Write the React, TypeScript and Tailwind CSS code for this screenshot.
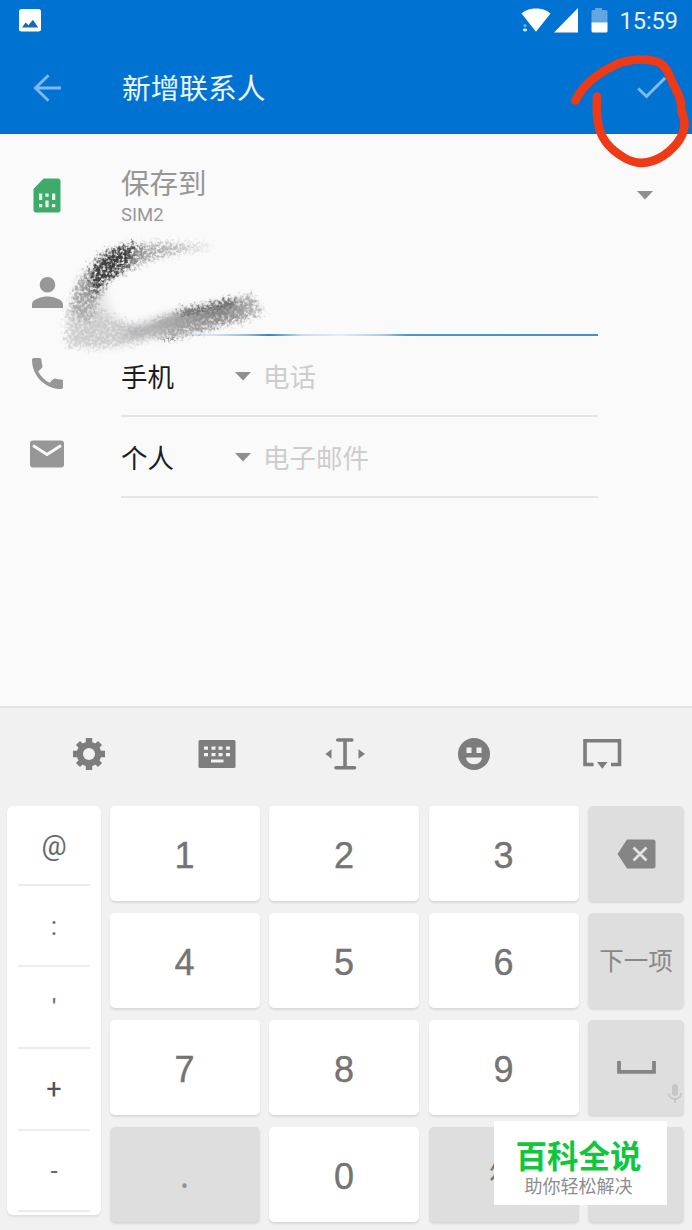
import type { ReactNode } from "react";

const FONT = "font-['Roboto','Noto_Sans_CJK_SC',sans-serif]";
const CJK = "font-['Noto_Sans_CJK_SC',sans-serif]";

function Caret() {
  return (
    <svg width="16" height="9" viewBox="0 0 16 9" className="block shrink-0 fill-[#8f8f8f]">
      <path d="M0 0h16L8 8.6z" />
    </svg>
  );
}

function StatusBar() {
  return (
    <div className="flex h-10 items-center justify-between pr-[14px] pl-[19px]">
      <svg width="22" height="23" viewBox="0 0 22 23" className="block">
        <rect width="22" height="22.500" rx="2.500" fill="#fff" />
        <path d="M3 18.500l3.700-5 2.700 2.800 4.500-5.500 5.300 7.700z" fill="#1769b0" />
      </svg>
      <div className="flex items-center">
        <svg width="88" height="26" viewBox="0 0 88 26" className="mr-[11px] block">
          <path d="M1.500 6.500C6 2.500 11 1.500 16 1.500s10 1 14.500 5L16 24.800z" fill="#fff" />
          <circle cx="5" cy="18.500" r="1.600" fill="#6fb0e8" />
          <ellipse cx="5" cy="23" rx="2.200" ry="1.400" fill="#cfe5f8" />
          <path d="M58 1v24.500H34z" fill="#fff" />
          <path d="M71 3h4V1h7v2h4a1.500 1.500 0 0 1 1.500 1.500V16h-16V4.500A1.500 1.500 0 0 1 73 3z" fill="#5fa6e2" />
          <path d="M71.500 15.500h16V24a1.500 1.500 0 0 1-1.500 1.500H73a1.500 1.500 0 0 1-1.500-1.500z" fill="#fff" />
        </svg>
        <span className="pt-[4px] text-[23.500px] leading-none text-[#e4f1fc]">15:59</span>
      </div>
    </div>
  );
}

function AppBar() {
  return (
    <div className="flex h-[94px] items-center pt-px pr-[25px] pl-[33px]">
      <svg width="29" height="28" viewBox="0 0 29 28" className="block" fill="none" stroke="#7db9ee" strokeWidth="2.900">
        <path d="M28 14H3M15.500 1.300L2.500 14l13 12.700" />
      </svg>
      <h1 className={`ml-[60px] flex-1 text-[28.700px] leading-none text-[#e9f5ff] ${CJK}`}>新增联系人</h1>
      <svg width="30" height="22" viewBox="0 0 30 22" className="block" fill="none" stroke="#7fbcf3" strokeWidth="3">
        <path d="M1.300 11.500l8.200 8L28 1" />
      </svg>
    </div>
  );
}

function RedCircle() {
  return (
    <svg width="132" height="120" viewBox="560 50 132 120" className="pointer-events-none absolute top-[50px] left-[560px]" fill="none" stroke="#ee3a17" strokeWidth="8.600" strokeLinecap="round" strokeLinejoin="round">
      <path d="M575.500 100.500C582 86 597 74 614 65.500C628 59 643 59 652 60.500C662 62 667 68 671 79C675 89 682 98 681 107C680 112 685 116 684.500 124C684 138 673 149 663 156C650 164 637 166 623 157C610 149 600 139 598 122C596 112 597 103 597 96.500" />
    </svg>
  );
}

function Smudge() {
  return (
    <svg width="400" height="130" viewBox="40 230 400 130" className="pointer-events-none absolute top-[230px] left-[40px]">
      <defs>
        <filter id="grain" x="-15%" y="-30%" width="130%" height="160%" colorInterpolationFilters="sRGB">
          <feGaussianBlur in="SourceGraphic" stdDeviation="2.4" result="soft" />
          <feTurbulence type="fractalNoise" baseFrequency="0.32" numOctaves="2" seed="8" result="noise" />
          <feDisplacementMap in="soft" in2="noise" scale="17" xChannelSelector="R" yChannelSelector="G" result="rough" />
          <feColorMatrix in="noise" type="matrix" values="0 0 0 0 0  0 0 0 0 0  0 0 0 0 0  0 0 3.2 0 -0.75" result="holes" />
          <feComposite in="rough" in2="holes" operator="in" result="speckled" />
          <feGaussianBlur in="speckled" stdDeviation="0.7" />
        </filter>
        <filter id="haze" x="-20%" y="-40%" width="140%" height="180%">
          <feGaussianBlur stdDeviation="4" />
        </filter>
        <linearGradient id="upper" gradientUnits="userSpaceOnUse" x1="85" y1="0" x2="220" y2="0">
          <stop offset="0" stopColor="#777" />
          <stop offset="0.18" stopColor="#555" />
          <stop offset="0.32" stopColor="#6a6a6a" />
          <stop offset="0.44" stopColor="#a5a5a5" />
          <stop offset="0.7" stopColor="#bdbdbd" />
          <stop offset="1" stopColor="#ddd" />
        </linearGradient>
        <linearGradient id="lower" gradientUnits="userSpaceOnUse" x1="100" y1="0" x2="260" y2="0">
          <stop offset="0" stopColor="#ccc" stopOpacity="0.2" />
          <stop offset="0.4" stopColor="#aaa" />
          <stop offset="0.75" stopColor="#858585" />
          <stop offset="1" stopColor="#b5b5b5" />
        </linearGradient>
      </defs>
      <path d="M75 300Q80 272 100 268L108 300Q112 322 150 332L134 343Q96 350 72 340z" fill="#ccc" opacity="0.4" filter="url(#haze)" />
      <g filter="url(#grain)">
        <path d="M72 314Q72 286 86 272L102 262L104 290Q96 300 90 322z" fill="#888" opacity="0.75" />
        <path d="M90 288L92 266Q104 246 150 244Q192 243 214 247Q176 252 152 259Q122 268 96 290z" fill="url(#upper)" />
        <path d="M92 294L93 266Q104 247 134 244L124 268Q108 276 94 294z" fill="#3f3f3f" />
        <path d="M66 310L94 296Q100 324 150 326L147 340Q98 352 66 346z" fill="#b5b5b5" opacity="0.55" />
        <path d="M222 302L250 294L263 312L232 323z" fill="#909090" opacity="0.7" />
      </g>
      <path d="M120 334Q158 314 206 307Q232 302 247 302Q238 317 196 327Q164 336 134 337z" fill="#8c8c92" opacity="0.5" filter="url(#haze)" />
      <path d="M140 336Q150 320 172 315L233 301L246 304L249 318Q204 330 170 340z" fill="url(#lower)" opacity="0.9" filter="url(#grain)" />
      <path d="M148 326Q166 315 194 311L232 302L240 308Q200 322 146 332z" fill="url(#lower)" opacity="0.55" />
      <path d="M180 313Q208 309 234 301" fill="none" stroke="#555" strokeWidth="6" opacity="0.8" filter="url(#grain)" />
      <path d="M163 340l14-2" stroke="#777" strokeWidth="8" opacity="0.7" filter="url(#grain)" />
    </svg>
  );
}

function FieldRow({ icon, label, hint }: { icon: ReactNode; label: string; hint: string }) {
  return (
    <div className="flex h-[81px]">
      <div className="flex w-[121px] items-start pl-[29px]">{icon}</div>
      <div className={`flex h-[81px] w-[477px] items-center border-b-2 border-[#e5e5e5] pt-px text-[26.500px] leading-none ${CJK}`}>
        <span className="w-[114px] text-[#1d1d1d]">{label}</span>
        <Caret />
        <span className="ml-3 text-[#cdcdcd]">{hint}</span>
      </div>
    </div>
  );
}

function ContactForm() {
  return (
    <div className="flex h-[572px] flex-col bg-[#fafafa]">
      <div className="flex h-[110px] pl-[33px]">
        <svg width="28" height="35" viewBox="0 0 28 35" className="mt-[44px] block">
          <path d="M10.500 0.500H25A2.500 2.500 0 0 1 27.500 3v29A2.500 2.500 0 0 1 25 34.500H3A2.500 2.500 0 0 1 .500 32V11z" fill="#3fab6b" />
          <path d="M6 15.500h3.200v6.500H6zM12.400 15.500h3.200v3.200h-3.200zM19 15.500h3.200v6.500H19zM6 26h3.200v3.200H6zM12.400 22.500h3.200v6.700h-3.200zM19 26h3.200v3.200H19z" fill="#eafbf0" />
        </svg>
        <div className="ml-[60px] flex-1 pt-[33px]">
          <div className={`text-[28.500px] leading-[30px] text-[#979797] ${CJK}`}>保存到</div>
          <div className="mt-[7px] text-[18.500px] leading-[22px] text-[#979797]">SIM2</div>
        </div>
        <div className="pt-[57px] pr-[39px]">
          <Caret />
        </div>
      </div>
      <div className="flex h-[92px]">
        <div className="w-[121px] pt-[33px] pl-8">
          <svg width="31" height="31" viewBox="4 4 16 16" className="block fill-[#979797]">
            <path d="M12 12c2.210 0 4-1.790 4-4s-1.790-4-4-4-4 1.790-4 4 1.790 4 4 4zm0 2c-2.670 0-8 1.340-8 4v2h16v-2c0-2.660-5.330-4-8-4z" />
          </svg>
        </div>
        <div className="flex w-[477px] items-end">
          <div className="h-[2px] w-full bg-[linear-gradient(90deg,#fafafa00_8%,#cfe0ed_20%,#8db5d5_27%,#3583bf_31%,#c9dceb_38%,#e4edf4_46%,#a9cae4_55%,#4d95cf_60%,#4590cf_100%)]" />
        </div>
      </div>
      <FieldRow
        label="手机"
        hint="电话"
        icon={
          <svg width="31" height="31" viewBox="3 3 18 18" className="mt-[22px] ml-[3px] block fill-[#979797]">
            <path d="M6.620 10.790c1.440 2.830 3.760 5.140 6.590 6.590l2.200-2.200c.270-.270.670-.360 1.020-.240 1.120.370 2.330.570 3.570.570.550 0 1 .450 1 1V20c0 .550-.450 1-1 1-9.390 0-17-7.610-17-17 0-.550.450-1 1-1h3.500c.550 0 1 .450 1 1 0 1.250.200 2.450.570 3.570.110.350.030.740-.250 1.020l-2.200 2.200z" />
          </svg>
        }
      />
      <FieldRow
        label="个人"
        hint="电子邮件"
        icon={
          <svg width="36" height="28" viewBox="0 0 36 28" className="mt-[23px] block">
            <rect x="1" y=".5" width="34" height="27" rx="3" fill="#979797" />
            <path d="M4 5.500l14 9 14-9" fill="none" stroke="#fafafa" strokeWidth="2.800" />
          </svg>
        }
      />
    </div>
  );
}

function Toolbar() {
  return (
    <div className="flex h-[92px] items-center justify-between px-[70px]">
      <svg width="38" height="38" viewBox="-19 -19 38 38" className="block">
        <g fill="#7d7d7d">
          <circle r="12.300" />
          <path d="M-3.200-16h6.400v32h-6.400zM-16-3.200h32v6.400h-32z" />
          <path transform="rotate(45)" d="M-2.900-15.600h5.800v31.200h-5.800zM-15.600-2.900h31.200v5.800h-31.200z" />
        </g>
        <circle r="6" fill="#f1f1f1" />
      </svg>
      <svg width="38" height="38" viewBox="0 0 38 38" className="block">
        <rect x=".5" y="5" width="37" height="28" rx="1.500" fill="#7d7d7d" />
        <path d="M6 11.500h4v3.200H6zM13.500 11.500h4v3.200h-4zM20.500 11.500h4v3.200h-4zM28 11.500h4v3.200h-4zM6 18h4v3.200H6zM13.500 18h4v3.200h-4zM20.500 18h4v3.200h-4zM28 18h4v3.200h-4zM13 24.500h12.500v3H13z" fill="#f1f1f1" />
      </svg>
      <svg width="40" height="38" viewBox="0 0 40 38" className="block" fill="none" stroke="#7d7d7d" strokeWidth="3.600" strokeLinecap="round">
        <path d="M12.800 5h14M11 32.700h18.500M20 5v27" />
        <path d="M6.500 14.200v9.600L.500 19zM33.500 14.200v9.600L40 19z" fill="#7d7d7d" stroke="none" />
      </svg>
      <svg width="38" height="38" viewBox="0 0 38 38" className="block">
        <circle cx="19" cy="19" r="16" fill="#7d7d7d" />
        <path d="M11.500 12.500h5V18h-5zM21.500 12.500h5V18h-5zM11 22.500h16c-.5 4.500-4 6.700-8 6.700s-7.500-2.200-8-6.700z" fill="#f1f1f1" />
      </svg>
      <svg width="40" height="38" viewBox="0 0 40 38" className="block">
        <path d="M11.500 29.500H3V5.800h34.500v23.700H29" fill="none" stroke="#7d7d7d" strokeWidth="3.600" />
        <path d="M15 27h10.500l-5.250 6.800z" fill="#7d7d7d" />
      </svg>
    </div>
  );
}

function Key({ children, dark = false }: { children?: ReactNode; dark?: boolean }) {
  return (
    <div
      className={`flex items-center justify-center rounded-[5px] text-[36px] leading-none text-[#747474] shadow-[0_2px_2px_rgba(0,0,0,0.1)] font-['Liberation_Sans','Noto_Sans_CJK_SC',sans-serif] ${dark ? "bg-[#dedede]" : "bg-white"}`}
    >
      {children}
    </div>
  );
}

const Digit = ({ n }: { n: number }) => (
  <Key>
    <span className="pt-[5px] [-webkit-text-stroke:0.4px_#747474]">{n}</span>
  </Key>
);

function SideSymbols() {
  const cell = "flex items-center justify-center border-b-2 border-[#ececec]";
  return (
    <div className="grid h-[409px] grid-rows-[80px_81px_82px_82px_81px] rounded-[6px] bg-white px-[11px] text-[26px] leading-none text-[#666a70] shadow-[0_2px_2px_rgba(0,0,0,0.08)]">
      <div className={`${cell} pt-0.5 text-[28px]`}>@</div>
      <div className={cell}>:</div>
      <div className={`${cell} text-[22px] font-medium`}>'</div>
      <div className={`${cell} text-[27px] text-[#50535a]`}>+</div>
      <div className={cell}>-</div>
    </div>
  );
}

function Keypad() {
  return (
    <div className="grid grid-cols-[94px_150px_150px_150px_96px] gap-x-[9.500px] pl-[7px]">
      <SideSymbols />
      <div className="col-span-4 -ml-px grid grid-cols-[150px_150px_150px_96px] grid-rows-[95px_95px_95px_95px] gap-x-[9.500px] gap-y-3">
        <Digit n={1} />
        <Digit n={2} />
        <Digit n={3} />
        <Key dark>
          <svg width="39" height="30" viewBox="0 0 39 30" className="block">
            <path d="M10 .5h26A2.500 2.500 0 0 1 38.500 3v24a2.500 2.500 0 0 1-2.500 2.500H10L.5 15z" fill="#858585" />
            <path d="M16.500 8.500l13 13M29.500 8.500l-13 13" stroke="#e2e2e2" strokeWidth="2.800" />
          </svg>
        </Key>
        <Digit n={4} />
        <Digit n={5} />
        <Digit n={6} />
        <Key dark>
          <span className={`text-[24.500px] text-[#888] ${CJK}`}>下一项</span>
        </Key>
        <Digit n={7} />
        <Digit n={8} />
        <Digit n={9} />
        <div className="relative grid">
          <Key dark>
            <svg width="39" height="13" viewBox="0 0 39 13" className="block" fill="none" stroke="#858585" strokeWidth="3.800">
              <path d="M2 0v10.800h35V0" />
            </svg>
          </Key>
          <svg width="14" height="19" viewBox="5 2 14 19" className="absolute right-[2px] bottom-[12px] fill-[#c6c6c6]">
            <path d="M12 14c1.660 0 2.990-1.340 2.990-3L15 5c0-1.660-1.340-3-3-3S9 3.340 9 5v6c0 1.660 1.340 3 3 3zm5.300-3c0 3-2.540 5.100-5.300 5.100S6.700 14 6.700 11H5c0 3.410 2.720 6.230 6 6.720V21h2v-3.280c3.280-.480 6-3.300 6-6.720h-1.700z" />
          </svg>
        </div>
        <Key dark>
          <span className="text-[#929292] font-['Open_Sans',sans-serif]">.</span>
        </Key>
        <Digit n={0} />
        <Key dark>
          <span className={`text-[29px] ${CJK}`}>符</span>
        </Key>
        <Key dark />
      </div>
    </div>
  );
}

function Watermark() {
  return (
    <div className={`absolute top-[1121px] left-[494px] flex h-[84px] w-[173px] flex-col items-center bg-white pt-[17px] pr-1 ${CJK}`}>
      <div className="text-[31.500px] leading-[33px] font-bold text-[#0fc73c]">百科全说</div>
      <div className="mt-[4px] text-[18px] leading-[20px] text-[#8d8d8d]">助你轻松解决</div>
    </div>
  );
}

export default function App() {
  return (
    <div className={`relative h-[1230px] w-[692px] overflow-hidden bg-[#f1f1f1] ${FONT}`}>
      <header className="h-[134px] bg-[#0072d2]">
        <StatusBar />
        <AppBar />
      </header>
      <ContactForm />
      <section className="border-t-2 border-[#e3e3e3]">
        <Toolbar />
        <div className="pt-[6px]">
          <Keypad />
        </div>
      </section>
      <Smudge />
      <RedCircle />
      <Watermark />
    </div>
  );
}
